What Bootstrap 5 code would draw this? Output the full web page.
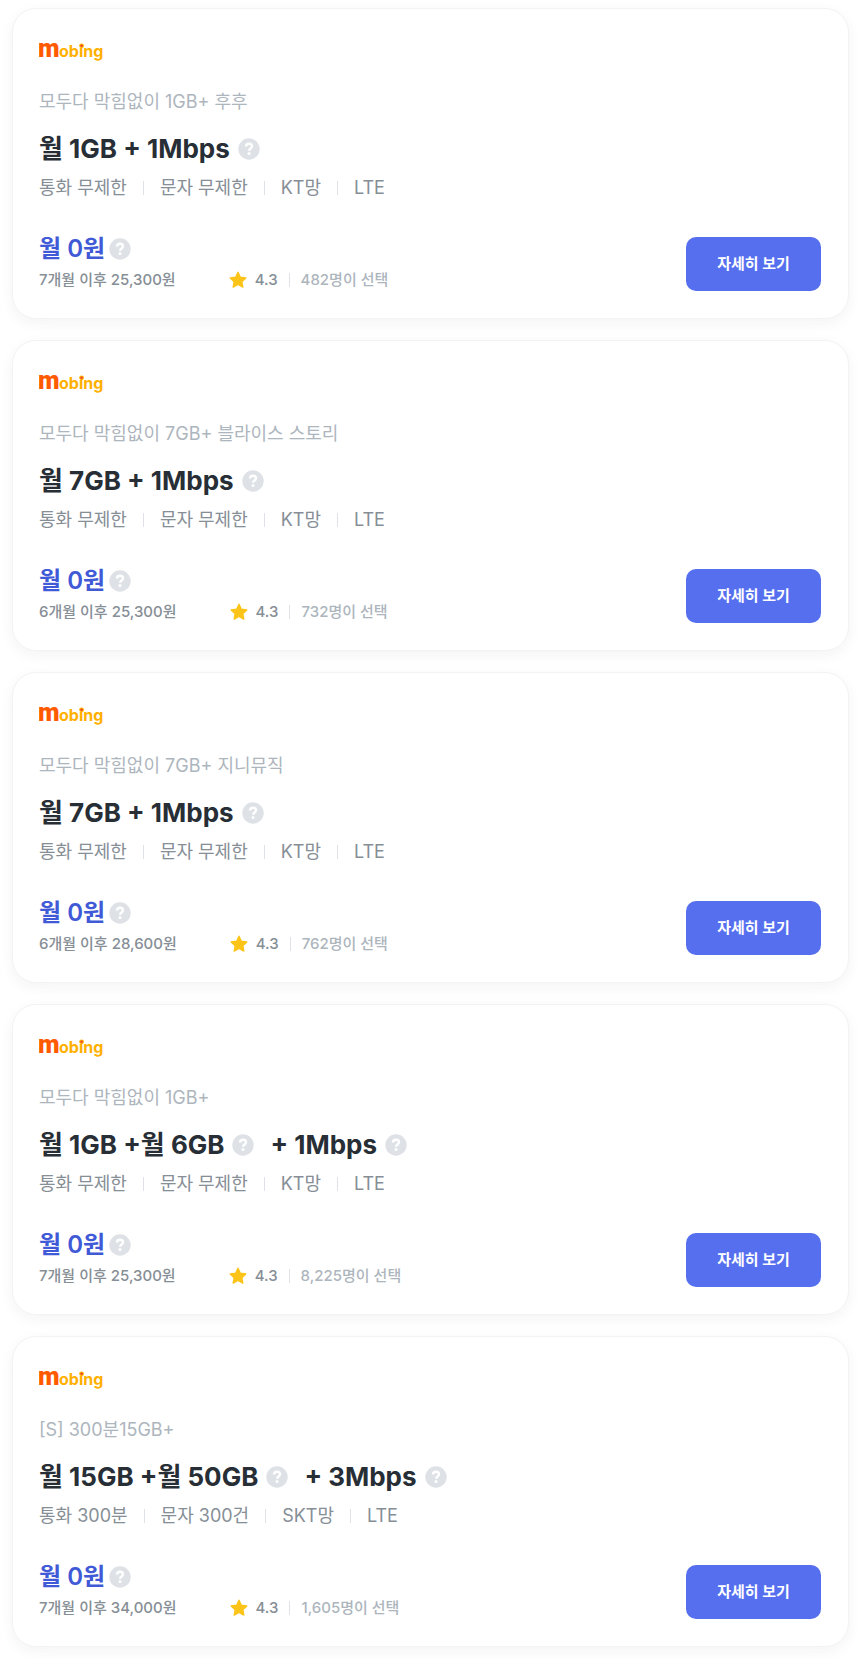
<!DOCTYPE html>
<html lang="ko">
<head>
<meta charset="utf-8">
<meta name="viewport" content="width=device-width, initial-scale=1">
<title>모빙 요금제</title>
<link href="https://cdn.jsdelivr.net/npm/bootstrap@5.3.0/dist/css/bootstrap.min.css" rel="stylesheet">
<style>
body { font-family: Inter, "Noto Sans CJK KR", sans-serif; color: #868e96; background: #fff; }
.plan-list { padding: 8px 11px 12px 12px; gap: 21px; }
.plan { border: 1px solid #f1f3f5; border-radius: 24px; padding: 26px 27px 27px 26px; box-shadow: 0 4px 14px rgba(33, 37, 41, .05); }
.brand { height: 36px; margin-bottom: 17px; }
.plan-name { font-size: 18px; line-height: 28px; color: #adb5bd; margin-bottom: 13px; }
.plan-title { font-size: 26px; line-height: 40px; font-weight: 700; color: #272e35; margin-bottom: 5px; }
.specs { font-size: 18px; line-height: 28px; margin-bottom: 27px; }
.specs li + li::before { content: ""; display: inline-block; width: 1px; height: 14px; margin: 0 16px; background: #dee2e6; vertical-align: -1px; }
.price { font-size: 24px; line-height: 40px; font-weight: 600; color: #4059d6; gap: 4px; }
.after { font-size: 15px; line-height: 22px; font-weight: 500; }
.rating { margin-left: 53px; }
.rating svg { margin-right: 8px; }
.chosen { color: #adb5bd; }
.chosen::before { content: ""; display: inline-block; width: 1px; height: 14px; margin: 0 11px; background: #dee2e6; vertical-align: -2px; }
.help { width: 22px; height: 22px; }
.detail { --bs-btn-color: #fff; --bs-btn-bg: #566fef; --bs-btn-hover-color: #fff; --bs-btn-hover-bg: #4059d6; --bs-btn-active-color: #fff; --bs-btn-active-bg: #4059d6; width: 135px; height: 54px; border-radius: 10px; font-size: 15px; font-weight: 700; }
</style>
</head>
<body>
<svg class="d-none" aria-hidden="true">
  <symbol id="help" viewBox="0 0 22 22">
    <circle cx="11" cy="11" r="10.7" fill="#dee2e6"/>
    <path d="M8 8.5C8 6.6 9.2 5.7 11 5.7s3 1 3 2.6c0 2.1-2.9 2.2-2.9 4.4" fill="none" stroke="#fff" stroke-width="2.4"/>
    <circle cx="11" cy="15.6" r="1.5" fill="#fff"/>
  </symbol>
  <symbol id="star" viewBox="0 0 18 18">
    <path d="M9 1.2l2.3 5 5.5.7-4 3.8 1 5.4L9 13.5l-4.8 2.6 1-5.4-4-3.8 5.5-.7z" fill="#fcc419" stroke="#fcc419" stroke-width="1.4" stroke-linejoin="round"/>
  </symbol>
  <symbol id="mobing" viewBox="0 0 66 24">
    <text x="-1" y="16" font-family="Roboto, sans-serif" font-weight="900" font-size="25" fill="#ff5a00" textRendering="geometricPrecision">m</text>
    <text x="20" y="16" font-family="Inter, sans-serif" font-weight="700" font-size="16" fill="#ffb000">obing</text>
    <circle cx="42.6" cy="4.8" r="2.4" fill="#ffb000"/><circle cx="42.6" cy="4.8" r="1.2" fill="#f04030"/>
  </symbol>
</svg>
<main class="plan-list d-flex flex-column">

  <article class="plan card">
    <div class="brand d-flex align-items-center"><svg width="66" height="24" role="img" aria-label="mobing"><use href="#mobing"/></svg></div>
    <div class="plan-name">모두다 막힘없이 1GB+ 후후</div>
    <h2 class="plan-title d-flex align-items-center"><span>월 1GB + 1Mbps</span><svg class="help ms-2"><use href="#help"/></svg></h2>
    <ul class="specs list-unstyled d-flex"><li>통화 무제한</li><li>문자 무제한</li><li>KT망</li><li>LTE</li></ul>
    <div class="d-flex justify-content-between align-items-end">
      <div>
        <div class="price d-flex align-items-center"><span>월 0원</span><svg class="help"><use href="#help"/></svg></div>
        <div class="after d-flex align-items-center"><span>7개월 이후 25,300원</span><span class="rating d-flex align-items-center"><svg width="18" height="18"><use href="#star"/></svg>4.3</span><span class="chosen">482명이 선택</span></div>
      </div>
      <button type="button" class="btn detail">자세히 보기</button>
    </div>
  </article>

  <article class="plan card">
    <div class="brand d-flex align-items-center"><svg width="66" height="24" role="img" aria-label="mobing"><use href="#mobing"/></svg></div>
    <div class="plan-name">모두다 막힘없이 7GB+ 블라이스 스토리</div>
    <h2 class="plan-title d-flex align-items-center"><span>월 7GB + 1Mbps</span><svg class="help ms-2"><use href="#help"/></svg></h2>
    <ul class="specs list-unstyled d-flex"><li>통화 무제한</li><li>문자 무제한</li><li>KT망</li><li>LTE</li></ul>
    <div class="d-flex justify-content-between align-items-end">
      <div>
        <div class="price d-flex align-items-center"><span>월 0원</span><svg class="help"><use href="#help"/></svg></div>
        <div class="after d-flex align-items-center"><span>6개월 이후 25,300원</span><span class="rating d-flex align-items-center"><svg width="18" height="18"><use href="#star"/></svg>4.3</span><span class="chosen">732명이 선택</span></div>
      </div>
      <button type="button" class="btn detail">자세히 보기</button>
    </div>
  </article>

  <article class="plan card">
    <div class="brand d-flex align-items-center"><svg width="66" height="24" role="img" aria-label="mobing"><use href="#mobing"/></svg></div>
    <div class="plan-name">모두다 막힘없이 7GB+ 지니뮤직</div>
    <h2 class="plan-title d-flex align-items-center"><span>월 7GB + 1Mbps</span><svg class="help ms-2"><use href="#help"/></svg></h2>
    <ul class="specs list-unstyled d-flex"><li>통화 무제한</li><li>문자 무제한</li><li>KT망</li><li>LTE</li></ul>
    <div class="d-flex justify-content-between align-items-end">
      <div>
        <div class="price d-flex align-items-center"><span>월 0원</span><svg class="help"><use href="#help"/></svg></div>
        <div class="after d-flex align-items-center"><span>6개월 이후 28,600원</span><span class="rating d-flex align-items-center"><svg width="18" height="18"><use href="#star"/></svg>4.3</span><span class="chosen">762명이 선택</span></div>
      </div>
      <button type="button" class="btn detail">자세히 보기</button>
    </div>
  </article>

  <article class="plan card">
    <div class="brand d-flex align-items-center"><svg width="66" height="24" role="img" aria-label="mobing"><use href="#mobing"/></svg></div>
    <div class="plan-name">모두다 막힘없이 1GB+</div>
    <h2 class="plan-title d-flex align-items-center"><span>월 1GB +월 6GB</span><svg class="help ms-2 me-3"><use href="#help"/></svg><span>+ 1Mbps</span><svg class="help ms-2"><use href="#help"/></svg></h2>
    <ul class="specs list-unstyled d-flex"><li>통화 무제한</li><li>문자 무제한</li><li>KT망</li><li>LTE</li></ul>
    <div class="d-flex justify-content-between align-items-end">
      <div>
        <div class="price d-flex align-items-center"><span>월 0원</span><svg class="help"><use href="#help"/></svg></div>
        <div class="after d-flex align-items-center"><span>7개월 이후 25,300원</span><span class="rating d-flex align-items-center"><svg width="18" height="18"><use href="#star"/></svg>4.3</span><span class="chosen">8,225명이 선택</span></div>
      </div>
      <button type="button" class="btn detail">자세히 보기</button>
    </div>
  </article>

  <article class="plan card">
    <div class="brand d-flex align-items-center"><svg width="66" height="24" role="img" aria-label="mobing"><use href="#mobing"/></svg></div>
    <div class="plan-name">[S] 300분15GB+</div>
    <h2 class="plan-title d-flex align-items-center"><span>월 15GB +월 50GB</span><svg class="help ms-2 me-3"><use href="#help"/></svg><span>+ 3Mbps</span><svg class="help ms-2"><use href="#help"/></svg></h2>
    <ul class="specs list-unstyled d-flex"><li>통화 300분</li><li>문자 300건</li><li>SKT망</li><li>LTE</li></ul>
    <div class="d-flex justify-content-between align-items-end">
      <div>
        <div class="price d-flex align-items-center"><span>월 0원</span><svg class="help"><use href="#help"/></svg></div>
        <div class="after d-flex align-items-center"><span>7개월 이후 34,000원</span><span class="rating d-flex align-items-center"><svg width="18" height="18"><use href="#star"/></svg>4.3</span><span class="chosen">1,605명이 선택</span></div>
      </div>
      <button type="button" class="btn detail">자세히 보기</button>
    </div>
  </article>

</main>
<script src="https://cdn.jsdelivr.net/npm/bootstrap@5.3.0/dist/js/bootstrap.bundle.min.js"></script>
</body>
</html>
